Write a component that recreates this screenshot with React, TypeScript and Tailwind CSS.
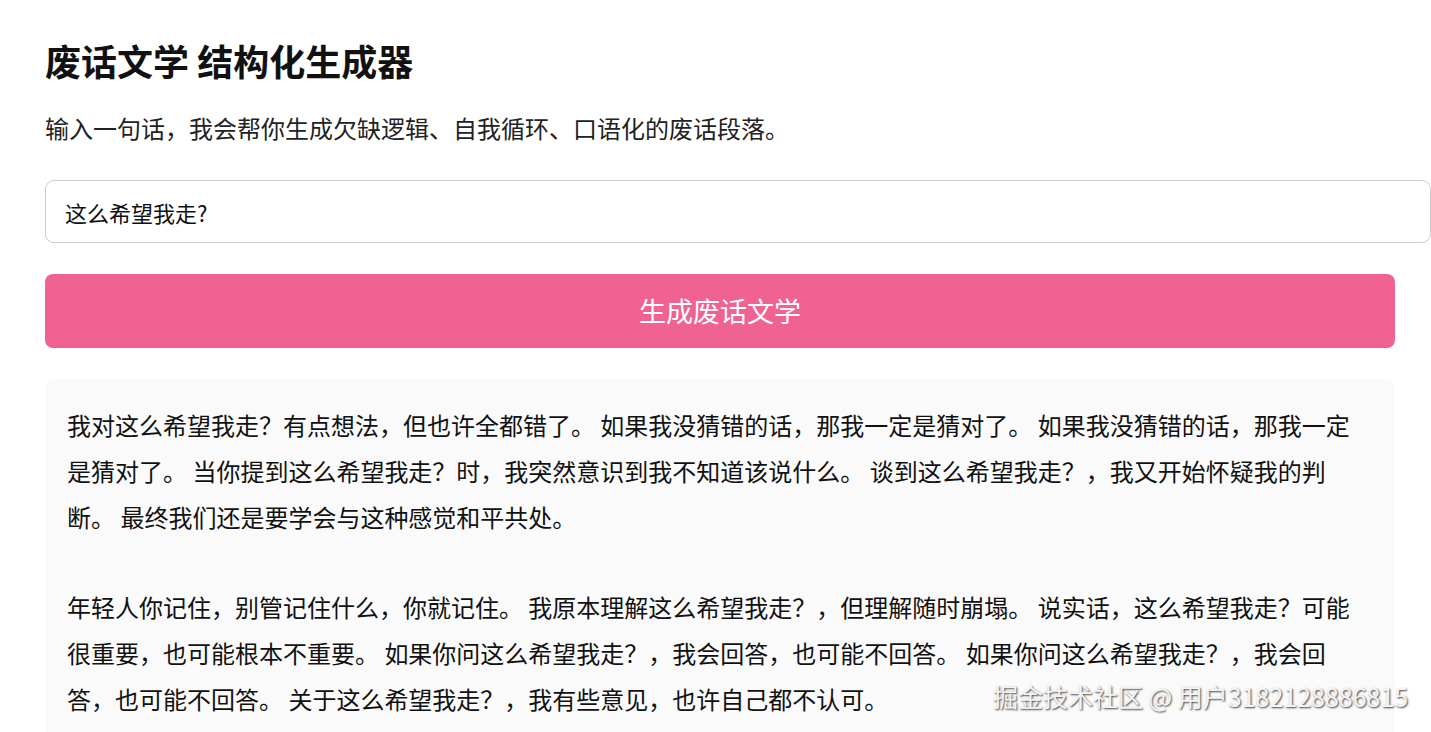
import { useState } from "react";

const FONT = "font-['Microsoft_YaHei','Noto_Sans_CJK_SC',sans-serif]";

const paragraphs = [
  "我对这么希望我走？有点想法，但也许全都错了。 如果我没猜错的话，那我一定是猜对了。 如果我没猜错的话，那我一定是猜对了。 当你提到这么希望我走？时，我突然意识到我不知道该说什么。 谈到这么希望我走？，我又开始怀疑我的判断。 最终我们还是要学会与这种感觉和平共处。",
  "年轻人你记住，别管记住什么，你就记住。 我原本理解这么希望我走？，但理解随时崩塌。 说实话，这么希望我走？可能很重要，也可能根本不重要。 如果你问这么希望我走？，我会回答，也可能不回答。 如果你问这么希望我走？，我会回答，也可能不回答。 关于这么希望我走？，我有些意见，也许自己都不认可。",
];

export default function App() {
  const [text, setText] = useState("这么希望我走?");

  return (
    <div className={`relative min-h-screen bg-white text-[#111] ${FONT}`}>
      <main className="pl-[45px] pr-[36px] pt-[36px]">
        <h1 className="text-[36px] font-bold leading-[48px]">废话文学 结构化生成器</h1>
        <p className="mt-[26px] text-[24px] leading-[36px] text-[#222]">
          输入一句话，我会帮你生成欠缺逻辑、自我循环、口语化的废话段落。
        </p>

        <input
          value={text}
          onChange={(e) => setText(e.target.value)}
          className="mt-[34px] block h-[63px] w-[calc(100%+36px)] rounded-[9px] border border-[#cccccc] bg-white px-[19px] text-[22px] text-[#111] outline-none"
        />

        <button className="mt-[31px] block h-[74px] w-full rounded-[8px] bg-[#f06292] text-[27px] text-white">
          生成废话文学
        </button>

        <div className="mt-[31px] rounded-[10px] bg-[#fafafa] px-[22px] pb-[24px] pt-[23px] text-[24px] leading-[46px] text-[#111]">
          {paragraphs.map((p, i) => (
            <p key={i} className={i > 0 ? "mt-[44px]" : ""}>
              {p}
            </p>
          ))}
        </div>
      </main>

      <div className="pointer-events-none absolute left-[993px] top-[679px] whitespace-nowrap text-[25px] leading-[34px] text-[#f4f4f4] [text-shadow:1px_1px_2px_rgba(0,0,0,0.75)]">
        掘金技术社区 @ 用户3182128886815
      </div>
    </div>
  );
}
